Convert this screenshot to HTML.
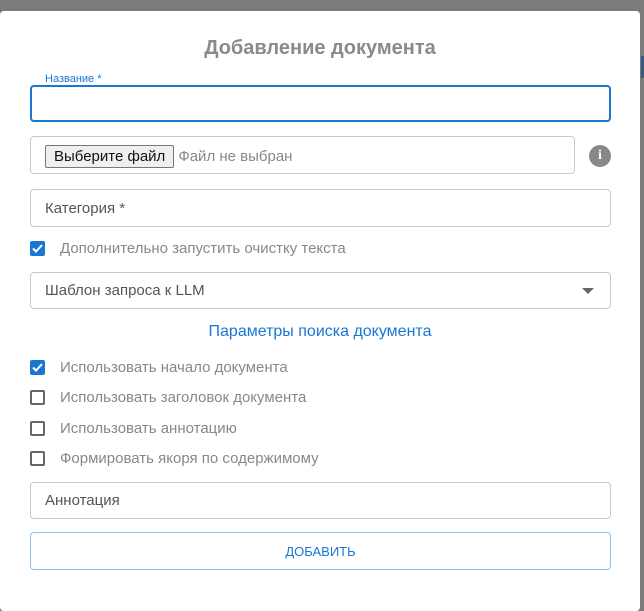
<!DOCTYPE html>
<html><head><meta charset="utf-8"><style>
*{box-sizing:border-box}
body{margin:0;width:644px;height:599px;background:#7b7b7b;font-family:"Liberation Sans",sans-serif;position:relative;overflow:hidden}
.dlg{position:absolute;left:0;top:11px;width:640px;height:600px;background:#fff;border-radius:4px}
.t{position:absolute;top:37px;left:0;width:640px;text-align:center;font-size:20px;font-weight:bold;color:#8a8a8a}
.f{position:absolute;left:30px;width:581px;border:1px solid #c8c8c8;border-radius:4px;font-size:15px;color:#555;padding-left:14px;display:flex;align-items:center}
.cb{position:absolute;left:30px;font-size:15px;color:#888;display:flex;align-items:center}
.box{width:15px;height:15px;border:2px solid #666;border-radius:2px;margin-right:15px}
.box.on{background:#1976d2;border-color:#1976d2;position:relative}
</style></head><body>
<div class="dlg"></div>
<div style="position:absolute;right:0;top:56px;width:3px;height:22px;background:#3a5a80"></div>
<div class="t">Добавление документа</div>
<div class="f" style="top:85px;height:37px;border:2px solid #1976d2"></div>
<div style="position:absolute;left:40px;top:73px;background:#fff;padding:0 5px;font-size:11px;color:#1976d2">Название *</div>
<div class="f" style="top:136px;height:38px;width:545px;padding-top:2px"><span style="border:1px solid #777;background:#efefef;border-radius:2px;font-size:15px;color:#111;padding:2px 8px;margin-right:4px">Выберите файл</span><span style="color:#888">Файл не выбран</span></div>
<div style="position:absolute;left:589px;top:145px;width:22px;height:22px;border-radius:50%;background:#888;color:#fff;font-weight:bold;font-size:14px;text-align:center;line-height:22px;font-family:'Liberation Serif',serif">i</div>
<div class="f" style="top:189px;height:38px">Категория *</div>
<div class="cb" style="top:240px"><div class="box on"><svg width="15" height="15" viewBox="0 0 15 15" style="position:absolute;left:-2px;top:-2px"><path d="M3 7.5l3 3 6-6.5" stroke="#fff" stroke-width="2" fill="none"/></svg></div>Дополнительно запустить очистку текста</div>
<div class="f" style="top:272px;height:37px">Шаблон запроса к LLM<svg style="position:absolute;right:16px;top:15px" width="12" height="7"><path d="M0 0h12L6 6z" fill="#666"/></svg></div>
<div style="position:absolute;top:323px;left:0;width:640px;text-align:center;font-size:16px;color:#1976d2">Параметры поиска документа</div>
<div class="cb" style="top:359px"><div class="box on"><svg width="15" height="15" viewBox="0 0 15 15" style="position:absolute;left:-2px;top:-2px"><path d="M3 7.5l3 3 6-6.5" stroke="#fff" stroke-width="2" fill="none"/></svg></div>Использовать начало документа</div>
<div class="cb" style="top:389px"><div class="box"></div>Использовать заголовок документа</div>
<div class="cb" style="top:420px"><div class="box"></div>Использовать аннотацию</div>
<div class="cb" style="top:450px"><div class="box"></div>Формировать якоря по содержимому</div>
<div class="f" style="top:482px;height:37px">Аннотация</div>
<div class="f" style="top:532px;height:38px;border-color:#90c0ee;justify-content:center;padding:0;color:#1976d2;font-size:13px">ДОБАВИТЬ</div>
</body></html>
